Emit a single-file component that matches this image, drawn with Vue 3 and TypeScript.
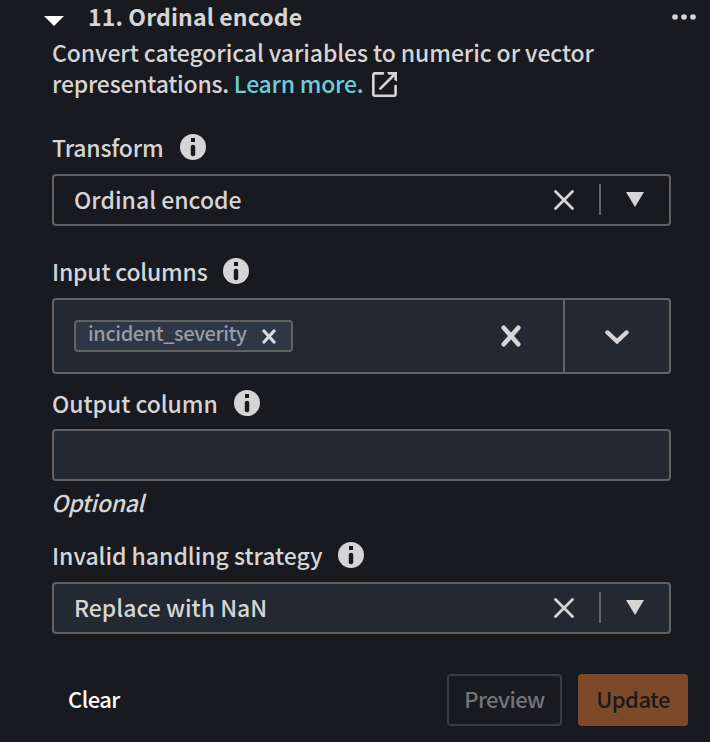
<script setup lang="ts">
import { ref } from 'vue'

const transform = ref('Ordinal encode')
const columns = ref<string[]>(['incident_severity'])
const outputColumn = ref('')
const strategy = ref('Replace with NaN')
</script>

<template>
  <section class="panel">
    <header class="head">
      <svg class="caret" width="20" height="10" viewBox="0 0 20 10"><path d="M0 0H20L10 10Z" fill="#fff" /></svg>
      <h2 class="title">11. Ordinal encode</h2>
      <svg class="dots" width="24" height="6" viewBox="0 0 24 6" fill="#d5d5d5">
        <circle cx="3" cy="3" r="2.8" /><circle cx="12" cy="3" r="2.8" /><circle cx="21" cy="3" r="2.8" />
      </svg>
    </header>

    <div class="body">
      <p class="desc">
        <span class="line-one">Convert categorical variables to numeric or vector</span><br />
        <span class="line-two">representations. <a class="link">Learn more.</a></span>
        <svg class="external" width="25" height="25" viewBox="0 0 25 25" fill="none" stroke="#d5d5d5" stroke-width="2.6">
          <path d="M11 1.4H3Q1.3 1.4 1.3 3V22Q1.3 23.7 3 23.7H22Q23.6 23.7 23.6 22V14" stroke-linecap="round" />
          <path d="M8.3 16.7L21.5 3.5" stroke-linecap="round" />
          <path d="M15 0H25V9.5L22.3 8V4.5L20.5 2.7H16.5Z" fill="#d5d5d5" stroke="none" />
        </svg>
      </p>

      <div class="label transform-label">
        <span class="t-transform">Transform</span>
        <svg class="info" viewBox="0 0 26 26"><circle cx="13" cy="13" r="13" fill="#d5d5d5" /><path d="M11 4h4v4h-4z" fill="#191a1f" /><rect x="10.8" y="10.8" width="4.4" height="11.4" rx="2" fill="#191a1f" /></svg>
      </div>
      <div class="field">
        <span class="value">{{ transform }}</span>
        <svg class="clear" viewBox="0 0 20 20"><path d="M1.5 1.5L18.5 18.5M18.5 1.5L1.5 18.5" /></svg>
        <i class="divider"></i>
        <svg class="triangle" viewBox="0 0 18 15"><path d="M0 0H18L9 15Z" /></svg>
      </div>

      <div class="label columns-label">
        <span class="t-columns">Input columns</span>
        <svg class="info" viewBox="0 0 26 26"><circle cx="13" cy="13" r="13" fill="#d5d5d5" /><path d="M11 4h4v4h-4z" fill="#191a1f" /><rect x="10.8" y="10.8" width="4.4" height="11.4" rx="2" fill="#191a1f" /></svg>
      </div>
      <div class="multi">
        <div class="chips">
          <span v-for="c in columns" :key="c" class="chip">
            <span class="chip-text">{{ c }}</span>
            <svg width="14" height="15" viewBox="0 0 14 15"><path d="M2 2L12 13M12 2L2 13" stroke="#d5d9df" stroke-width="3.3" stroke-linecap="round" /></svg>
          </span>
          <svg class="clear-all" width="20" height="22" viewBox="0 0 20 22"><path d="M2.7 2.7L17.3 19.3M17.3 2.7L2.7 19.3" stroke="#d5d5d5" stroke-width="4.6" stroke-linecap="round" /></svg>
        </div>
        <div class="toggle">
          <svg width="24" height="14" viewBox="0 0 24 14"><path d="M2.4 2.4L12 11.4L21.6 2.4" fill="none" stroke="#d5d5d5" stroke-width="4.2" stroke-linecap="round" /></svg>
        </div>
      </div>

      <div class="label output-label">
        <span class="t-output">Output column</span>
        <svg class="info" viewBox="0 0 26 26"><circle cx="13" cy="13" r="13" fill="#d5d5d5" /><path d="M11 4h4v4h-4z" fill="#191a1f" /><rect x="10.8" y="10.8" width="4.4" height="11.4" rx="2" fill="#191a1f" /></svg>
      </div>
      <input v-model="outputColumn" class="field filled" type="text" />
      <div class="hint">Optional</div>

      <div class="label strategy-label">
        <span class="t-strategy">Invalid handling strategy</span>
        <svg class="info" viewBox="0 0 26 26"><circle cx="13" cy="13" r="13" fill="#d5d5d5" /><path d="M11 4h4v4h-4z" fill="#191a1f" /><rect x="10.8" y="10.8" width="4.4" height="11.4" rx="2" fill="#191a1f" /></svg>
      </div>
      <div class="field filled">
        <span class="value">{{ strategy }}</span>
        <svg class="clear" viewBox="0 0 20 20"><path d="M1.5 1.5L18.5 18.5M18.5 1.5L1.5 18.5" /></svg>
        <i class="divider"></i>
        <svg class="triangle" viewBox="0 0 18 15"><path d="M0 0H18L9 15Z" /></svg>
      </div>
    </div>

    <footer class="actions">
      <button class="btn text">Clear</button>
      <button class="btn preview">Preview</button>
      <button class="btn update">Update</button>
    </footer>
  </section>
</template>

<style>
body { background: #191a1f; }
</style>

<style scoped>
* { box-sizing: border-box; }
.panel {
  width: 710px;
  height: 742px;
  overflow: hidden;
  background: #191a1f;
  color: #d5d5d5;
  font: 500 23px/30px "Noto Sans CJK SC", "Noto Sans", sans-serif;
  white-space: nowrap;
}
svg { display: block; flex: none; }
.head { display: flex; align-items: center; height: 36px; padding: 0 14px 2px 44px; }
.caret { margin-top: 7px; }
.title { margin: -2px auto 0 24px; font-size: 23px; font-weight: 700; letter-spacing: 0.12px; }
.body { padding: 0 39px 0 52px; }
.desc { margin: 0; height: 62px; padding-top: 1px; line-height: 31px; }
.line-one { letter-spacing: -0.08px; }
.line-two { letter-spacing: -0.24px; }
.external { display: inline-block; vertical-align: -4px; margin-left: 8.5px; }
.link { color: #6fcadb; }
.label { display: flex; align-items: center; height: 30px; }
.info { width: 26px; height: 26px; }
.transform-label { margin: 34px 0 12px; }
.columns-label { margin: 30px 0 12px; }
.output-label { margin: 14px 0 11px; }
.strategy-label { margin: 23px 0 12px; }
.t-transform { width: 128px; letter-spacing: -0.2px; }
.t-columns { width: 171px; letter-spacing: -0.2px; }
.t-output { width: 182px; letter-spacing: -0.05px; }
.t-strategy { width: 286px; letter-spacing: -0.03px; }
.field {
  display: flex;
  align-items: center;
  width: 619px;
  height: 52px;
  padding: 0 25px 0 20px;
  border: 2px solid #626262;
  border-radius: 4px;
  background: transparent;
  outline: none;
}
.filled { background: #222933; }
.value { flex: 1; margin-top: -2px; }
.clear { width: 20px; height: 20px; fill: none; stroke: #d5d5d5; stroke-width: 2.8; stroke-linecap: round; }
.divider { width: 2px; height: 31px; margin: -1px 25px 0; background: #626262; }
.triangle { width: 18px; height: 15px; fill: #d5d5d5; margin-top: -1px; }
.multi { display: flex; width: 619px; height: 76px; border: 2px solid #626262; border-radius: 4px; background: #222933; }
.chips { display: flex; flex: 1; align-items: center; padding: 0 42px 0 20px; }
.chip {
  display: flex;
  align-items: center;
  gap: 15px;
  width: 219px;
  height: 32px;
  padding-left: 12px;
  border: 2px solid #626262;
  border-radius: 4px;
  background: #2e3746;
}
.chip-text { width: 159px; margin-top: -6px; font-size: 20px; line-height: 28px; letter-spacing: -0.42px; color: #979ca5; }
.clear-all { margin-left: auto; }
.toggle { display: grid; place-items: center; width: 106px; padding-top: 2px; border-left: 2px solid #626262; }
.hint { height: 36px; margin-left: -1px; padding-top: 7px; line-height: 29px; font-style: italic; letter-spacing: -0.35px; }
.actions { display: flex; align-items: center; height: 52px; margin-top: 40px; padding: 0 22px 0 68px; }
.btn { height: 52px; padding: 0 0 4px; border: 0; border-radius: 4px; background: transparent; color: #fff; font: inherit; font-size: 22px; letter-spacing: -0.55px; }
.preview { width: 115px; margin: 0 16px 0 auto; border: 2px solid #3b3c3f; color: #737478; }
.update { width: 110px; background: #7d4a29; color: #191a1f; }
</style>
